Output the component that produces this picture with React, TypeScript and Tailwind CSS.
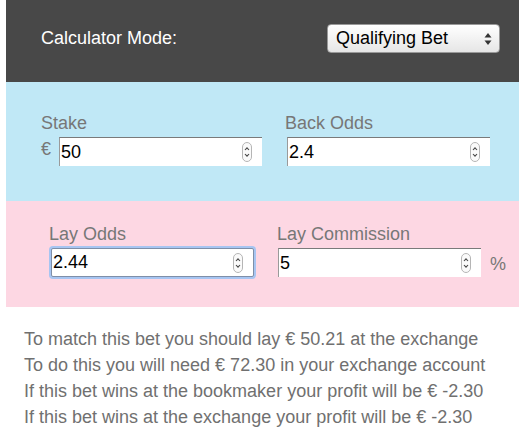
import React from 'react';

function Spinner() {
  return (
    <svg width="10" height="20" viewBox="0 0 10 20" className="shrink-0">
      <rect x="0.5" y="0.5" width="9" height="19" rx="4.5" fill="#fafafa" stroke="#b5b5b5" />
      <path d="M3 8 L5 5.8 L7 8" fill="none" stroke="#444" strokeWidth="1.1" />
      <path d="M3 12 L5 14.2 L7 12" fill="none" stroke="#444" strokeWidth="1.1" />
    </svg>
  );
}

function NumberBox({ value, focused }: { value: string; focused?: boolean }) {
  const box = focused
    ? 'border border-[#7f8fa8] shadow-[0_0_0_2px_#a7c5f2] rounded-[2px]'
    : 'border-t border-l border-t-[#7a7a7a] border-l-[#9a9a9a]';
  return (
    <div className={`flex items-center w-[203px] h-[29px] bg-white pr-[10px] ${box}`}>
      <input
        type="text"
        defaultValue={value}
        className="flex-1 min-w-0 h-full pl-[1px] text-[18px] text-black bg-transparent outline-none font-['Liberation_Sans',Arial,sans-serif]"
      />
      <Spinner />
    </div>
  );
}

export default function App() {
  return (
    <div className="px-[6px] bg-white font-['Liberation_Sans',Arial,sans-serif]">
      <div className="h-[82px] bg-[#484848] flex items-center justify-between pl-[35px] pr-[19px] pb-[5px]">
        <span className="text-white text-[18px]">Calculator Mode:</span>
        <div className="flex items-center justify-between w-[173px] h-[29px] rounded-[4px] border border-[#999] bg-gradient-to-b from-white to-[#e6e6e6] pl-[8px] pr-[7px]">
          <span className="text-black text-[18px]">Qualifying Bet</span>
          <svg width="8" height="14" viewBox="0 0 8 14">
            <path d="M4 1 L7.5 5.5 L0.5 5.5 Z" fill="#333" />
            <path d="M4 13 L7.5 8.5 L0.5 8.5 Z" fill="#333" />
          </svg>
        </div>
      </div>

      <div className="h-[119px] bg-[#c0e8f6] flex pl-[35px] pt-[31px]">
        <div className="w-[244px]">
          <div className="text-[18px] leading-[20px] text-[#777]">Stake</div>
          <div className="flex items-center mt-[4px]">
            <span className="w-[18px] text-[18px] text-[#777] -mt-[4px]">€</span>
            <NumberBox value="50" />
          </div>
        </div>
        <div>
          <div className="text-[18px] leading-[20px] text-[#777]">Back Odds</div>
          <div className="mt-[4px] ml-[2px]">
            <NumberBox value="2.4" />
          </div>
        </div>
      </div>

      <div className="h-[106px] bg-[#fdd7e3] flex pl-[43px] pt-[23px]">
        <div className="w-[228px]">
          <div className="text-[18px] leading-[20px] text-[#777]">Lay Odds</div>
          <div className="mt-[4px] ml-[2px]">
            <NumberBox value="2.44" focused />
          </div>
        </div>
        <div>
          <div className="text-[18px] leading-[20px] text-[#777]">Lay Commission</div>
          <div className="flex items-start mt-[4px] ml-[1px]">
            <NumberBox value="5" />
            <span className="ml-[9px] text-[18px] leading-[29px] pt-[2px] text-[#777]">%</span>
          </div>
        </div>
      </div>

      <div className="pl-[18px] pt-[19px] text-[18px] leading-[26px] text-[#707070]">
        <div>To match this bet you should lay € 50.21 at the exchange</div>
        <div>To do this you will need € 72.30 in your exchange account</div>
        <div>If this bet wins at the bookmaker your profit will be € -2.30</div>
        <div>If this bet wins at the exchange your profit will be € -2.30</div>
      </div>
    </div>
  );
}
